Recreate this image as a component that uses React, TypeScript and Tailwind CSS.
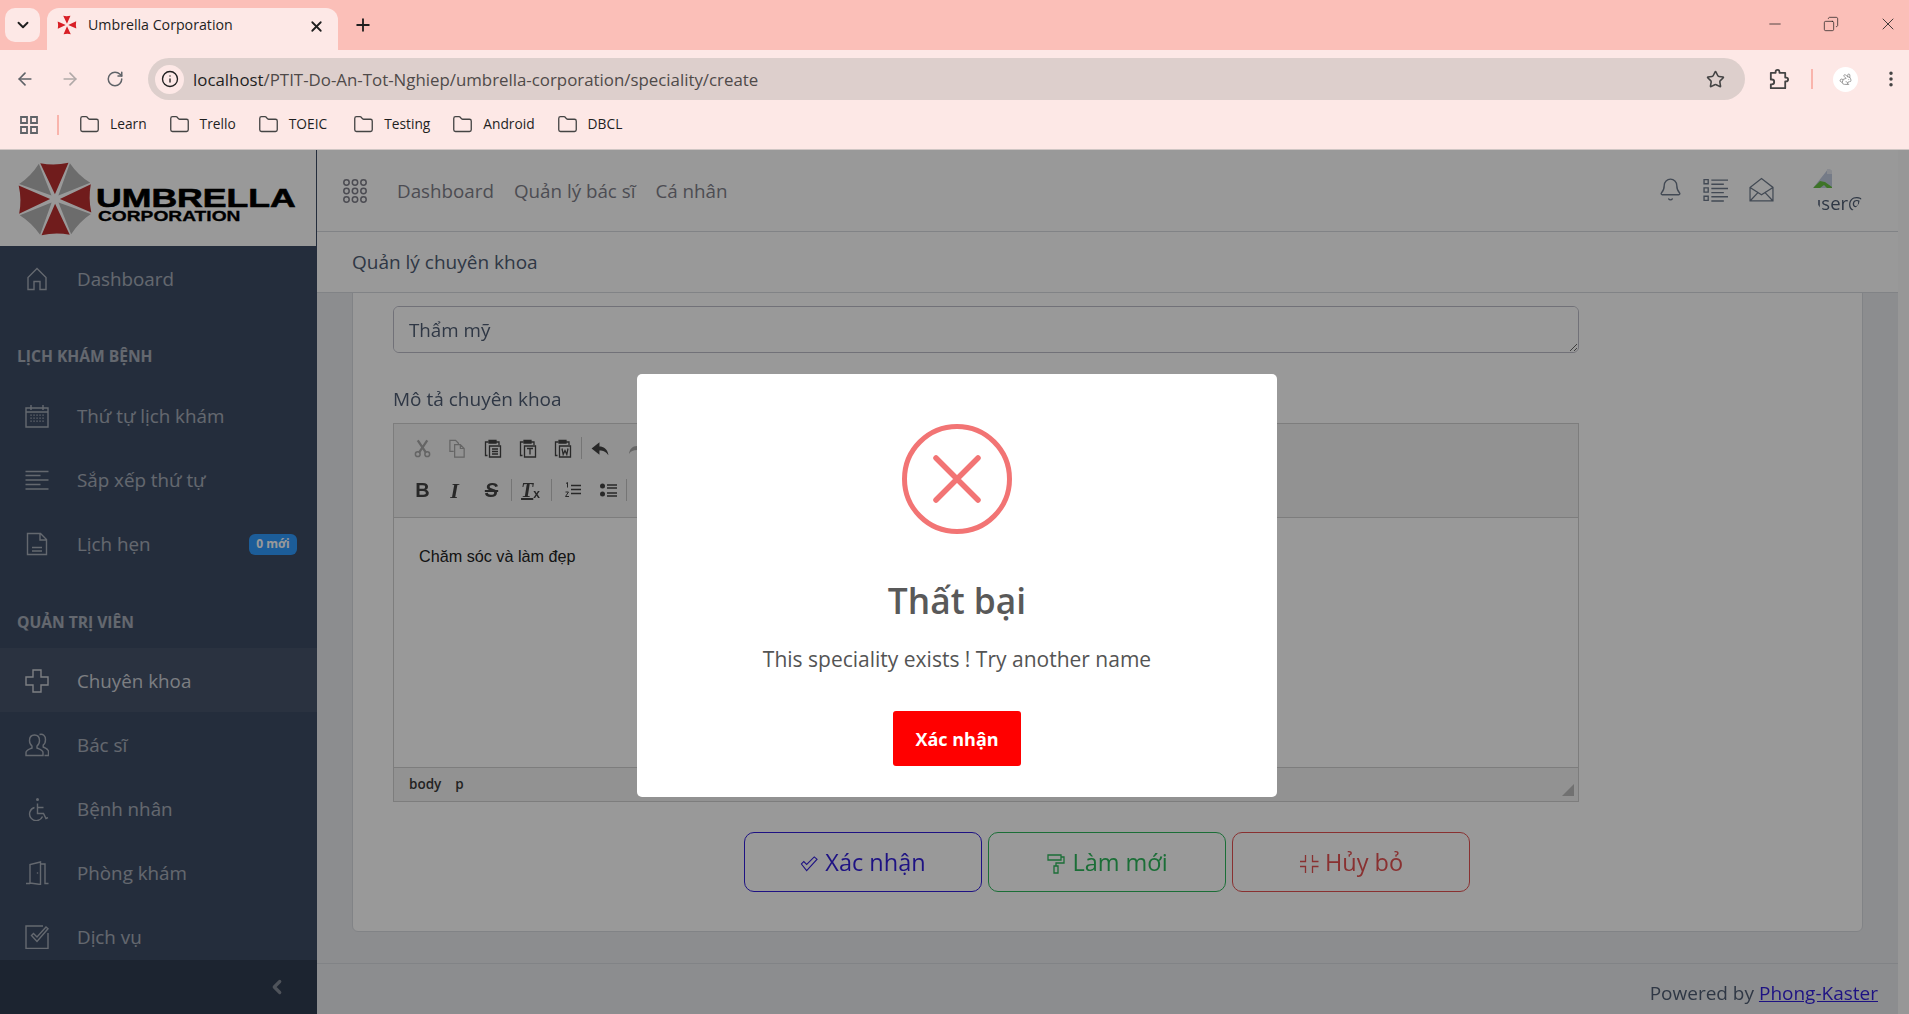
import type { ReactNode } from "react";
import {
  ArrowLeft,
  ArrowRight,
  Bell,
  ChevronDown,
  ChevronLeft,
  Copy,
  EllipsisVertical,
  Folder,
  Info,
  Minus,
  Plus,
  Rabbit,
  RotateCw,
  Star,
  X,
} from "lucide-react";

const Line = ({ children, className }: { children: ReactNode; className?: string }) => (
  <svg
    viewBox="0 0 24 24"
    fill="none"
    stroke="currentColor"
    strokeWidth="1.4"
    className={className ?? "w-[24px] h-[24px] shrink-0"}
  >
    {children}
  </svg>
);

const UmbrellaMark = ({ size, gray, red }: { size: number; gray: string; red: string }) => (
  <svg viewBox="-40 -40 80 80" width={size} height={size} className="shrink-0">
    {[0, 1, 2, 3, 4, 5, 6, 7].map((i) => (
      <path
        key={i}
        d="M0 -5 L-14.5 -37 Q0 -34 14.5 -37 Z"
        fill={i % 2 === 0 ? red : gray}
        transform={`rotate(${i * 45 - 1})`}
      />
    ))}
  </svg>
);

const calendarDots = [10.5, 13.5, 16.5].flatMap((y) =>
  [6, 9, 12, 15, 18].map((x) => <rect key={`${x}-${y}`} x={x - 0.6} y={y} width="1.3" height="1.3" fill="currentColor" stroke="none" />)
);

const HomeIcon = () => (
  <Line>
    <path d="M3 22.5V10.5L12 1.5l9 9v12h-6v-8H9v8z" />
  </Line>
);
const CalendarIcon = () => (
  <Line>
    <path d="M1 4h22v19H1z M1 8h22 M6 1v5 M18 1v5" />
    {calendarDots}
  </Line>
);
const AlignIcon = () => (
  <Line>
    <path d="M0.5 3.5h23 M0.5 7.5h15 M0.5 12h23 M0.5 16.5h15 M0.5 21h23" strokeWidth="1.5" />
  </Line>
);
const FileIcon = () => (
  <Line>
    <path d="M2.5 1.5h13l6 6v15h-19z M15 1.5v6.5h6.5 M7 15.5h10 M7 19h10" />
  </Line>
);
const CrossIcon = () => (
  <Line>
    <path d="M8 1h8v7h7v8h-7v7H8v-7H1V8h7z" />
  </Line>
);
const UsersIcon = () => (
  <Line>
    <path d="M1 22.5v-3c0-2.5 4-3.5 6-4.5v-2c-1.5-1-2.5-3-2.5-5.5C4.500 4 6.500 2 9.500 2s5 2 5 5.500c0 2.500-1 4.500-2.500 5.500v2c2 1 6 2 6 4.500v3z" />
    <path d="M14.500 1.500c3.500-1 6 1.500 6 5 0 2.500-.8 4.500-2.300 5.500v2c2 1 5.300 2 5.300 4.500v4h-4" />
  </Line>
);
const AccessibleIcon = () => (
  <Line>
    <circle cx="12.500" cy="2.500" r="1.500" fill="currentColor" stroke="none" />
    <path d="M12.500 6.500v10h6l2.500 5 2-.8 M12.500 10.500h6" />
    <path d="M9.500 10.500a6.700 6.700 0 1 0 8 9" />
  </Line>
);
const DoorIcon = () => (
  <Line>
    <path d="M1 22.500h4 M5 22V3.500L15.500 1v22.500L5 22 M15.500 3h4.500v19.500h3.500" />
    <circle cx="12.500" cy="12" r="0.800" fill="currentColor" stroke="none" />
  </Line>
);
const CheckSquareIcon = () => (
  <Line>
    <path d="M18 1H1v22.500h22V8" />
    <path d="M6.500 10.500l2-2 3.500 3.500 9-10 2 1.800-11 12.700z" />
  </Line>
);

const TopListIcon = () => (
  <Line className="w-[25px] h-[25px] shrink-0">
    <path d="M1 2.500h4v4H1z M1 10.500h4v4H1z M1 18.500h4v4H1z M8 3h16 M8 7h12 M8 11h16 M8 15h12 M8 19h16 M8 23h12" strokeWidth="1.300" />
  </Line>
);

const EnvelopeOpenIcon = () => (
  <Line className="w-[25px] h-[25px] shrink-0">
    <path d="M1 10L12 1.500 23 10v13H1z M1 10l11 7 11-7 M1 23l8-8.500 M23 23l-8-8.500" strokeWidth="1.200" />
  </Line>
);

const ExtensionIcon = () => (
  <svg viewBox="0 0 24 24" fill="none" stroke="#444" strokeWidth="1.900" className="w-[23px] h-[23px] ml-[22px] shrink-0">
    <path d="M4 5h5V4a2 2 0 0 1 4 0v1h6v5h1a2 2 0 0 1 0 4h-1v7H4v-4h1a2.500 2.500 0 0 0 0-5H4z" strokeLinejoin="round" />
  </svg>
);

const AppsIcon = () => (
  <svg viewBox="0 0 24 24" fill="none" stroke="currentColor" strokeWidth="1.500" className="w-[24px] h-[24px] shrink-0">
    {[3.500, 12, 20.500].flatMap((y) =>
      [3.500, 12, 20.500].map((x) => <circle key={`${x}-${y}`} cx={x} cy={y} r="2.700" />)
    )}
  </svg>
);

const GridBookmarkIcon = () => (
  <svg viewBox="0 0 18 18" fill="none" stroke="#5f6368" strokeWidth="1.800" className="w-[18px] h-[18px] shrink-0">
    <path d="M1 1h6v6H1z M11 1h6v6h-6z M1 11h6v6H1z M11 11h6v6h-6z" />
  </svg>
);

const menuTop = [{ icon: <HomeIcon />, label: "Dashboard" }];
const menuSchedule = [
  { icon: <CalendarIcon />, label: "Thứ tự lịch khám" },
  { icon: <AlignIcon />, label: "Sắp xếp thứ tự" },
  { icon: <FileIcon />, label: "Lịch hẹn", badge: "0 mới" },
];
const menuAdmin = [
  { icon: <CrossIcon />, label: "Chuyên khoa", active: true },
  { icon: <UsersIcon />, label: "Bác sĩ" },
  { icon: <AccessibleIcon />, label: "Bệnh nhân" },
  { icon: <DoorIcon />, label: "Phòng khám" },
  { icon: <CheckSquareIcon />, label: "Dịch vụ" },
];

type MenuItem = { icon: ReactNode; label: string; badge?: string; active?: boolean };

const NavRow = ({ item }: { item: MenuItem }) => (
  <div
    className={`h-[64px] shrink-0 flex items-center pl-[25px] pr-[20px] pt-[2px] ${
      item.active ? "bg-white/5 text-white/75" : "text-white/55"
    }`}
  >
    {item.icon}
    <span className="ml-[28px] text-[18.800px] flex-1">{item.label}</span>
    {item.badge && (
      <span className="w-[48px] h-[21px] rounded-[6px] bg-[#2f9bff] text-white text-[12px] font-bold flex items-center justify-center">
        {item.badge}
      </span>
    )}
  </div>
);

const Sidebar = () => (
  <aside className="w-[317px] shrink-0 flex flex-col bg-[#3c4b64]">
    <div className="h-[96px] shrink-0 bg-white border-r border-[#3c4b64] flex items-center pl-[16px] pt-[2px]">
      <UmbrellaMark size={78} gray="#b4b4b4" red="#bb2f2f" />
      <div className="ml-[2px] mt-[11px] text-black font-['Liberation_Sans',sans-serif] font-bold">
        <div className="text-[26px] leading-[23px] origin-left scale-x-[1.37] [-webkit-text-stroke:0.600px_black]">UMBRELLA</div>
        <div className="ml-[2px] text-[14px] leading-[13px] origin-left scale-x-[1.37] [-webkit-text-stroke:0.300px_black]">CORPORATION</div>
      </div>
    </div>
    <nav className="flex-1 flex flex-col overflow-hidden">
      {menuTop.map((m) => (
        <NavRow key={m.label} item={m} />
      ))}
      <div className="h-[73px] shrink-0 flex items-end pb-[15px] pl-[17px] text-[15.600px] font-bold text-white/55">LỊCH KHÁM BỆNH</div>
      {menuSchedule.map((m) => (
        <NavRow key={m.label} item={m} />
      ))}
      <div className="h-[73px] shrink-0 flex items-end pb-[14px] pl-[17px] text-[15.600px] font-bold text-white/55">QUẢN TRỊ VIÊN</div>
      {menuAdmin.map((m) => (
        <NavRow key={m.label} item={m} />
      ))}
    </nav>
    <div className="h-[54px] shrink-0 bg-[#303c50] flex items-center justify-end pr-[29px] text-white/40">
      <ChevronLeft size={22} strokeWidth={3.500} />
    </div>
  </aside>
);

const EditorButton = ({ children, dim }: { children: ReactNode; dim?: boolean }) => (
  <div className={`w-[35px] h-[24px] flex items-center justify-center ${dim ? "text-[#a8a8a8]" : "text-[#444]"}`}>{children}</div>
);

const Sep = ({ className }: { className?: string }) => <div className={`w-px h-[22px] bg-[#c4c4c4] ${className ?? "mx-[1px]"}`} />;

const pasteIcon = (inner: ReactNode) => (
  <svg viewBox="0 0 20 20" fill="none" stroke="currentColor" strokeWidth="1.300" className="w-[20px] h-[20px]">
    <path d="M4.500 17.500H2.500V4h3 M13 4h3v3" />
    <path d="M6 2.500h7V5H6z" fill="currentColor" />
    <path d="M6.500 8h11v11h-11z" />
    {inner}
  </svg>
);

const EditorToolbar = () => (
  <div className="h-[94px] bg-[#f3f3f3] border-b border-[#d1d1d1] pl-[11px] pt-[12px] overflow-hidden">
    <div className="flex items-center h-[24px]">
      <EditorButton dim>
        <svg viewBox="0 0 20 20" fill="none" stroke="currentColor" strokeWidth="1.600" className="w-[19px] h-[19px]">
          <circle cx="5" cy="16" r="2.500" />
          <circle cx="15" cy="16" r="2.500" />
          <path d="M6.500 14L15 1.500 M13.500 14L5 1.500" strokeWidth="2.400" />
        </svg>
      </EditorButton>
      <EditorButton dim>
        <svg viewBox="0 0 20 20" fill="none" stroke="currentColor" strokeWidth="1.300" className="w-[19px] h-[19px]">
          <path d="M6 13H2V1.500h6l3 3V6 M7 6h6l4 4v9H7z M13 6v4h4" />
        </svg>
      </EditorButton>
      <EditorButton>{pasteIcon(<path d="M9 11h6 M9 13.500h6 M9 16h6" />)}</EditorButton>
      <EditorButton>{pasteIcon(<path d="M9 10.500h6 M12 10.500v6" />)}</EditorButton>
      <EditorButton>{pasteIcon(<path d="M9 10.500l1.200 6 1.800-4 1.800 4 1.200-6" />)}</EditorButton>
      <Sep />
      <EditorButton>
        <svg viewBox="0 0 20 20" fill="currentColor" className="w-[21px] h-[21px]">
          <path d="M9 4L1.500 10 9 16v-4c4 0 6 1 8.500 4.500C17 11 13.500 8 9 8z" />
        </svg>
      </EditorButton>
      <EditorButton dim>
        <svg viewBox="0 0 20 20" fill="currentColor" className="w-[20px] h-[20px]">
          <path d="M11 4l7 6-7 6v-4c-4 0-6 1-8 4 .5-5 3.500-8 8-8z" />
        </svg>
      </EditorButton>
    </div>
    <div className="flex items-center h-[24px] mt-[18px] font-['Liberation_Serif',serif] text-[#444]">
      <EditorButton>
        <span className="font-['Liberation_Sans',sans-serif] font-bold text-[20px]">B</span>
      </EditorButton>
      <div className="-ml-[3px]">
        <EditorButton>
          <span className="font-bold italic text-[22px]">I</span>
        </EditorButton>
      </div>
      <div className="ml-[2px]">
        <EditorButton>
          <span className="font-['Liberation_Sans',sans-serif] font-bold italic text-[20px] line-through">S</span>
        </EditorButton>
      </div>
      <Sep className="ml-[2px] mr-[1px]" />
      <EditorButton>
        <span className="font-bold italic text-[20px] underline">T</span>
        <span className="font-['Liberation_Sans',sans-serif] font-bold text-[12px] mt-[8px]">x</span>
      </EditorButton>
      <Sep className="ml-[3px] mr-[3px]" />
      <EditorButton>
        <svg viewBox="0 0 20 20" fill="none" stroke="currentColor" className="w-[20px] h-[20px]">
          <path d="M8 5.500h10 M8 9.500h10 M8 13.500h10" strokeWidth="1.300" />
          <path d="M3 3.500l1.500-1v5 M2.500 12h3l-3 4.500h3.500" strokeWidth="1" />
        </svg>
      </EditorButton>
      <EditorButton>
        <svg viewBox="0 0 20 20" fill="none" stroke="currentColor" className="w-[20px] h-[20px]">
          <circle cx="4.500" cy="6" r="2.500" fill="currentColor" stroke="none" />
          <circle cx="4.500" cy="14" r="2.500" fill="currentColor" stroke="none" />
          <path d="M9 5h10 M9 8h10 M9 13h10 M9 16h10" strokeWidth="1.300" />
        </svg>
      </EditorButton>
      <Sep />
    </div>
  </div>
);

const Editor = () => (
  <div className="h-[379px] flex flex-col border border-[#d1d1d1] w-[1186px]">
    <EditorToolbar />
    <div className="flex-1 bg-white pl-[25px] pt-[26px] text-[16.200px] leading-[24px] text-[#222] font-['Liberation_Sans',sans-serif]">
      Chăm sóc và làm đẹp
    </div>
    <div className="h-[34px] shrink-0 relative bg-[#f3f3f3] border-t border-[#d1d1d1] flex items-center pl-[15px] gap-[14px] text-[13.500px] font-semibold text-[#3a3a3a]">
      <span>body</span>
      <span>p</span>
      <div className="absolute right-[4px] bottom-[5px] w-0 h-0 border-l-[12px] border-l-transparent border-b-[12px] border-b-[#bdbdbd]" />
    </div>
  </div>
);

const actions = [
  {
    label: "Xác nhận",
    color: "border-[#321fdb] text-[#321fdb]",
    icon: (
      <svg viewBox="0 0 20 20" fill="none" stroke="currentColor" strokeWidth="1.100" className="w-[19px] h-[19px] mt-[3px]">
        <path d="M1.500 10.500l2.500-2.500 3 3 8-8 3 2.500-11 12z" />
      </svg>
    ),
  },
  {
    label: "Làm mới",
    color: "border-[#2eb85c] text-[#2eb85c]",
    icon: (
      <svg viewBox="0 0 20 20" fill="none" stroke="currentColor" strokeWidth="1.300" className="w-[20px] h-[20px] mt-[3px]">
        <path d="M2 1h13v5H2z M15 3h3v6h-8v3 M8 12h4v7H8z" />
      </svg>
    ),
  },
  {
    label: "Hủy bỏ",
    color: "border-[#e55353] text-[#e55353]",
    icon: (
      <svg viewBox="0 0 20 20" fill="none" stroke="currentColor" strokeWidth="1.300" className="w-[20px] h-[20px] mt-[3px]">
        <path d="M6.500 1v6.500H1 M13.500 1v6.500h6 M6.500 19v-6.500H1 M13.500 19v-6.500h6" />
      </svg>
    ),
  },
];

const Card = () => (
  <div className="shrink-0 bg-white border border-[#d8dbe0] rounded-b-[6px] pl-[40px] pb-[39px] text-[#4f5d73]">
    <div className="text-[19px] leading-[30px] mb-[9px]">Tên chuyên khoa</div>
    <textarea
      readOnly
      value="Thẩm mỹ"
      className="block w-[1186px] h-[47px] rounded-[6px] border border-[#bdbdc9] bg-white px-[15px] py-[9px] text-[18.800px] leading-[28px] outline-none"
    />
    <div className="text-[19px] leading-[30px] mt-[31px] mb-[9px]">Mô tả chuyên khoa</div>
    <Editor />
    <div className="flex justify-center gap-[6px] mt-[30px] -ml-[41px]">
      {actions.map((a) => (
        <div key={a.label} className={`w-[238px] h-[60px] rounded-[10px] border flex items-center justify-center gap-[6px] text-[23.500px] ${a.color}`}>
          {a.icon}
          <span className="pt-[2px]">{a.label}</span>
        </div>
      ))}
    </div>
  </div>
);

const MainArea = () => (
  <main className="flex-1 min-w-0 flex flex-col bg-[#e9ebee]">
    <header className="h-[82px] shrink-0 bg-white border-b border-[#d8dbe0] flex items-center text-[#7f7f8a] pl-[26px]">
      <AppsIcon />
      <div className="flex items-center gap-[20px] ml-[30px] mt-[2px] text-[18.800px]">
        <span>Dashboard</span>
        <span>Quản lý bác sĩ</span>
        <span>Cá nhân</span>
      </div>
      <div className="ml-auto flex items-center text-[#6f7b8c] pr-[35px] -mt-[2px]">
        <Bell size={25} strokeWidth={1.300} />
        <div className="ml-[20px]">
          <TopListIcon />
        </div>
        <div className="ml-[21px]">
          <EnvelopeOpenIcon />
        </div>
        <div className="ml-[39px] w-[50px] h-[50px] rounded-full overflow-hidden text-[#4f5d73] text-[18.500px] leading-[22px] relative">
          <svg viewBox="0 0 20 20" className="w-[20px] h-[20px] mt-[3px]">
            <path d="M0 20L12 5l3-4 4 2v17z" fill="#c4cee2" />
            <path d="M0 20l7-7 5 1 7 5v1h-5l-3-3-4 3z" fill="#68c244" />
            <path d="M14 1h3l2 2v3h-5z" fill="#e4e8f0" />
          </svg>
          <div className="absolute left-[-3px] top-[27px] whitespace-nowrap">user@</div>
        </div>
      </div>
    </header>
    <div className="h-[61px] shrink-0 bg-white border-b border-[#d8dbe0] flex items-center pl-[35px] pt-[1px] text-[19px] text-[#4f5d73]">
      Quản lý chuyên khoa
    </div>
    <div className="flex-1 min-h-0 overflow-hidden flex flex-col justify-end px-[35px] pb-[31px]">
      <Card />
    </div>
    <footer className="h-[51px] shrink-0 border-t border-[#d8dbe0] flex items-center justify-end pr-[20px] pt-[9px] text-[19px] text-[#4f5d73]">
      <span>Powered by&nbsp;</span>
      <span className="text-[#321fdb] underline">Phong-Kaster</span>
    </footer>
  </main>
);

const Modal = () => (
  <div className="absolute inset-0 bg-black/40 flex items-center justify-center">
    <div className="w-[640px] h-[423px] rounded-[5px] bg-white flex flex-col items-center ml-[5px] mt-[6px]">
      <svg viewBox="0 0 110 110" className="w-[110px] h-[110px] mt-[50px] shrink-0" fill="none" stroke="#f27474">
        <circle cx="55" cy="55" r="52.500" strokeWidth="5" />
        <path d="M34 34l42 42 M76 34l-42 42" strokeWidth="5.500" strokeLinecap="round" />
      </svg>
      <div className="mt-[43px] text-[35.300px] leading-[46px] font-semibold text-[#595959]">Thất bại</div>
      <div className="mt-[21px] text-[21px] leading-[30px] text-[#545454]">This speciality exists ! Try another name</div>
      <div className="mt-[37px] w-[128px] h-[55px] rounded-[3px] bg-[#ff0000] text-white text-[18px] font-bold pt-[3px] flex items-center justify-center">
        Xác nhận
      </div>
    </div>
  </div>
);

const bookmarks = ["Learn", "Trello", "TOEIC", "Testing", "Android", "DBCL"];

const BrowserChrome = () => (
  <div className="h-[150px] shrink-0 flex flex-col bg-[#fde8e6] text-[#1f1f1f]">
    <div className="h-[50px] shrink-0 bg-[#fbbfb8] flex items-end pl-[5px]">
      <div className="w-[35px] h-[34px] mb-[8px] rounded-[10px] bg-[#fde8e6] flex items-center justify-center">
        <ChevronDown size={18} strokeWidth={2.500} />
      </div>
      <div className="ml-[7px] w-[291px] h-[42px] rounded-t-[12px] bg-[#fde8e6] flex items-center pl-[10px] pr-[13px] pb-[9px]">
        <UmbrellaMark size={20} gray="transparent" red="#d81f26" />
        <span className="ml-[11px] text-[14.200px] flex-1">Umbrella Corporation</span>
        <X size={17} strokeWidth={2.500} className="mt-[3px]" />
      </div>
      <div className="ml-[15px] mb-[15px]">
        <Plus size={20} strokeWidth={2.200} />
      </div>
      <div className="ml-auto self-stretch flex items-center gap-[39px] pr-[11px] pb-[2px]">
        <Minus size={18} strokeWidth={1} />
        <Copy size={16} strokeWidth={1.100} className="-scale-x-100" />
        <X size={20} strokeWidth={1} />
      </div>
    </div>
    <div className="h-[50px] shrink-0 flex items-center pl-[15px] pt-[8px] text-[#5f6368]">
      <ArrowLeft size={20} strokeWidth={2} />
      <ArrowRight size={20} strokeWidth={2} className="ml-[25px] text-[#b0a9a8]" />
      <RotateCw size={18} strokeWidth={2} className="ml-[26px]" />
      <div className="ml-[24px] w-[1597px] h-[42px] rounded-full bg-[#ddcfcc] flex items-center pl-[7px] pr-[20px]">
        <div className="w-[29px] h-[29px] rounded-full bg-[#fde8e6] flex items-center justify-center text-[#1f1f1f]">
          <Info size={18} strokeWidth={1.800} />
        </div>
        <div className="ml-[9px] pt-[2px] text-[16.850px] flex-1 whitespace-nowrap">
          <span className="text-[#1f1f1f]">localhost</span>
          <span className="text-[#4f4a49]">/PTIT-Do-An-Tot-Nghiep/umbrella-corporation/speciality/create</span>
        </div>
        <Star size={19} strokeWidth={2} className="text-[#444]" />
      </div>
      <ExtensionIcon />
      <div className="ml-[21px] w-[2px] h-[20px] bg-[#f9b4ac]" />
      <div className="ml-[20px] w-[25px] h-[25px] rounded-full bg-white flex items-center justify-center text-[#888]">
        <Rabbit size={13} strokeWidth={1.500} />
      </div>
      <EllipsisVertical size={20} strokeWidth={2.200} className="ml-[23px] text-[#444]" />
    </div>
    <div className="flex-1 flex items-center pl-[20px] border-b border-[#cfc6c4]">
      <GridBookmarkIcon />
      <div className="ml-[19px] w-[2px] h-[20px] bg-[#f9b4ac]" />
      <div className="ml-[20px] flex items-center gap-[22px] text-[13.750px]">
        {bookmarks.map((b) => (
          <div key={b} className={`flex items-center gap-[10px] ${b === "TOEIC" ? "mr-[4px]" : ""}`}>
            <Folder size={21} strokeWidth={1.500} className="text-[#444]" />
            <span>{b}</span>
          </div>
        ))}
      </div>
    </div>
  </div>
);

export default function App() {
  return (
    <div className="h-screen w-full overflow-hidden flex flex-col font-['Open_Sans',sans-serif]">
      <BrowserChrome />
      <div className="relative flex-1 min-h-0 flex bg-[#fcfcfc]">
        <Sidebar />
        <MainArea />
        <div className="w-[11px] shrink-0" />
        <Modal />
      </div>
    </div>
  );
}
